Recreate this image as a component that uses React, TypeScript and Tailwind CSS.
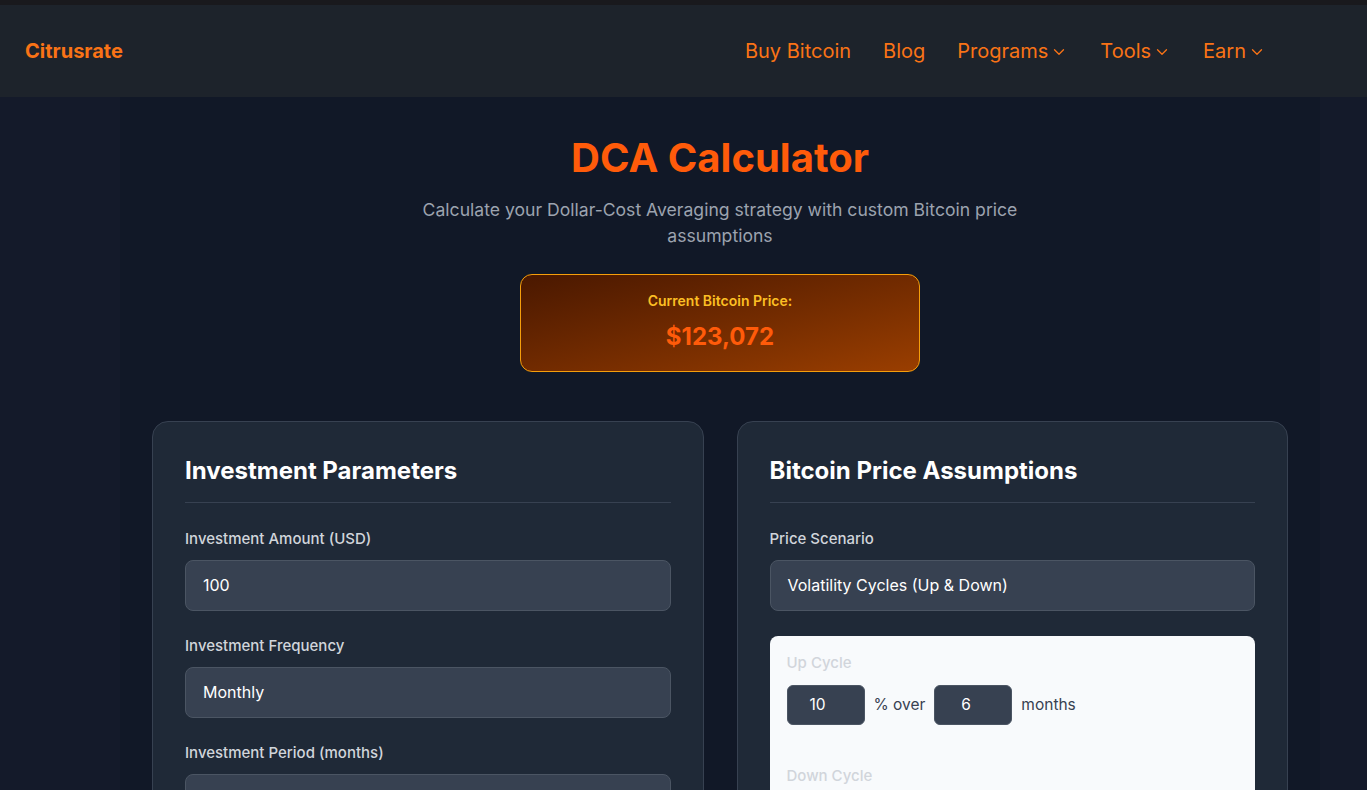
import { ChevronDown } from 'lucide-react';

const navItems = [
  { label: 'Buy Bitcoin', menu: false },
  { label: 'Blog', menu: false },
  { label: 'Programs', menu: true },
  { label: 'Tools', menu: true },
  { label: 'Earn', menu: true },
];

function Field({ label, value }: { label: string; value: string }) {
  return (
    <div className="mb-[25px]">
      <label className="block text-[15px] font-medium leading-5 text-[#d1d5db] mb-[11px]">{label}</label>
      <div className="h-[51px] rounded-lg border border-[#4b5563] bg-[#374151] px-[17px] pb-[2px] flex items-center text-base text-white">
        {value}
      </div>
    </div>
  );
}

function CycleRow({ title, pct, months }: { title: string; pct: string; months: string }) {
  return (
    <div className="mb-[41px]">
      <div className="text-[15px] font-medium leading-5 text-[#d1d5db] mb-[12px]">{title}</div>
      <div className="flex items-center gap-[9px] text-[15.5px] text-[#374151]">
        <div className="w-[78px] h-[40px] rounded-md border border-[#4b5563] bg-[#374151] pl-[22px] flex items-center text-white">
          {pct}
        </div>
        <span>% over</span>
        <div className="w-[78px] h-[40px] rounded-md border border-[#4b5563] bg-[#374151] pl-[26px] flex items-center text-white">
          {months}
        </div>
        <span>months</span>
      </div>
    </div>
  );
}

export default function App() {
  return (
    <div className="min-h-screen w-[1440px] bg-[#141a2a]" style={{ fontFamily: 'Inter, "Noto Sans", sans-serif' }}>
      <header className="h-[97px] border-t-[5px] border-[#19191d] bg-[#1d232b] flex items-center justify-between pl-[25px] pr-[174px]">
        <div className="text-xl font-bold text-[#f97316]">Citrusrate</div>
        <nav className="flex items-center gap-8">
          {navItems.map((item) => (
            <div key={item.label} className="flex items-center gap-[2px] text-xl text-[#f97316]">
              <span>{item.label}</span>
              {item.menu && <ChevronDown size={18} strokeWidth={1.75} className="mt-[2px]" />}
            </div>
          ))}
        </nav>
      </header>

      <main className="mx-auto w-[1200px] bg-[#111827] px-8 pb-10">
        <div className="flex flex-col items-center pt-[37px]">
          <h1 className="text-[40px] leading-[48px] font-bold text-[#ff5b0a]">DCA Calculator</h1>
          <p className="mt-[15px] max-w-[604px] text-center text-[17.6px] leading-[26px] text-[#9ca3af]">
            Calculate your Dollar-Cost Averaging strategy with custom Bitcoin price assumptions
          </p>
          <div className="mt-[25px] w-[400px] h-[98px] rounded-xl border border-[#f59e0b] bg-gradient-to-br from-[#4a1800] to-[#9a3e00] flex flex-col items-center pt-[16px]">
            <div className="text-sm font-semibold leading-5 text-[#fbbf24]">Current Bitcoin Price:</div>
            <div className="mt-[10px] text-2xl leading-8 font-bold text-[#ff5b0a]">$123,072</div>
          </div>
        </div>

        <div className="mt-[49px] grid grid-cols-2 gap-[33px]">
          <section className="rounded-2xl border border-[#374151] bg-[#1f2937] px-8 pt-[33px]">
            <h2 className="text-2xl leading-8 font-bold text-white pb-[15px] border-b border-[#374151]">
              Investment Parameters
            </h2>
            <div className="pt-[26px]">
              <Field label="Investment Amount (USD)" value="100" />
              <Field label="Investment Frequency" value="Monthly" />
              <Field label="Investment Period (months)" value="12" />
            </div>
          </section>

          <section className="rounded-2xl border border-[#374151] bg-[#1f2937] px-8 pt-[33px]">
            <h2 className="text-2xl leading-8 font-bold text-white pb-[15px] border-b border-[#374151]">
              Bitcoin Price Assumptions
            </h2>
            <div className="pt-[26px]">
              <Field label="Price Scenario" value="Volatility Cycles (Up & Down)" />
              <div className="rounded-lg bg-[#f8fafc] px-[17px] pt-[17px] pb-4">
                <CycleRow title="Up Cycle" pct="10" months="6" />
                <CycleRow title="Down Cycle" pct="-5" months="3" />
              </div>
            </div>
          </section>
        </div>
      </main>
    </div>
  );
}
